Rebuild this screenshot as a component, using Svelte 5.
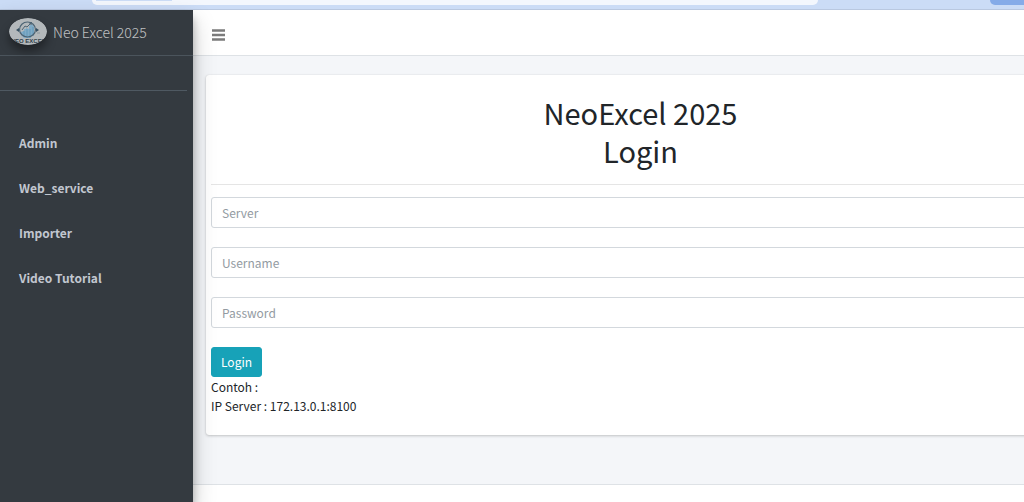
<script lang="ts">
  let server: string = '';
  let username: string = '';
  let password: string = '';

  let sidebarOpen: boolean = true;

  const menu = ['Admin', 'Web_service', 'Importer', 'Video Tutorial'];

  function handleSubmit(event: Event) {
    event.preventDefault();
  }
</script>

<div class="window">
  <!-- Browser toolbar -->
  <div class="toolbar">
    <div class="address"><div class="address-chip"></div></div>
    <div class="toolbar-pill"></div>
  </div>

  <div class="wrapper">
    {#if sidebarOpen}
      <aside class="sidebar">
        <a class="brand" href="#home">
          <svg class="brand-logo" viewBox="0 0 38 27" aria-hidden="true">
            <defs>
              <clipPath id="logo-oval"><ellipse cx="19" cy="13.5" rx="19" ry="13.5" /></clipPath>
            </defs>
            <g clip-path="url(#logo-oval)">
              <rect width="38" height="27" fill="#b3b8bb" />
              <path d="M12 17V14l3-1v-2h2v-1l3 1V8l3-2 2 3v7l-4 4h-6z" fill="#80abc7" />
              <path d="M15 19v-6M18 20v-9M21 20v-9M24 18V9" stroke="#6399b9" stroke-width="1" />
              <ellipse cx="18.5" cy="11.5" rx="8" ry="7.5" fill="none" stroke="#4d6474" stroke-width="1.2" />
              <path d="M13 12l3-4 2 1 5-5M20 5h2v2" fill="none" stroke="#4d6474" stroke-width="1" />
              <path d="M7 12l3-2v4zM30 12l-3-2v4z" fill="#354f60" />
              <path d="M28 15h3" stroke="#8b969d" stroke-width="1" />
              <text x="19" y="25" text-anchor="middle" class="logo-text">NEO EXCEL</text>
            </g>
          </svg>
          <span>Neo Excel 2025</span>
        </a>
        <div class="user-panel"></div>
        <nav>
          <ul>
            {#each menu as item}
              <li><a href="#{item}">{item}</a></li>
            {/each}
          </ul>
        </nav>
      </aside>
    {/if}

    <div class="page">
      <header class="navbar">
        <button class="toggle" aria-label="Toggle menu" on:click={() => (sidebarOpen = !sidebarOpen)}>
          <svg viewBox="0 0 13 12" width="13" height="12" aria-hidden="true">
            <path d="M0 1.5h13M0 6h13M0 10.5h13" stroke="#7b7b7b" stroke-width="2.4" />
          </svg>
        </button>
      </header>

      <main class="content">
        <div class="card">
          <h1>NeoExcel 2025<br />Login</h1>
          <hr />
          <form on:submit={handleSubmit}>
            <input type="text" aria-label="Server" placeholder="Server" bind:value={server} />
            <input type="text" aria-label="Username" placeholder="Username" bind:value={username} />
            <input type="password" aria-label="Password" placeholder="Password" bind:value={password} />
            <button class="login" type="submit">Login</button>
          </form>
          <p>Contoh :<br />IP Server : 172.13.0.1:8100</p>
        </div>
      </main>

      <footer></footer>
    </div>
  </div>
</div>

<style>
  :global(body) {
    overflow: hidden;
  }

  .window {
    display: flex;
    flex-direction: column;
    height: 100vh;
    overflow: hidden;
    font-family: "Noto Sans CJK JP", "Noto Sans", sans-serif;
    font-size: 12px;
    line-height: 19px;
    color: #212529;
  }

  .window * {
    box-sizing: border-box;
  }

  .toolbar {
    display: flex;
    flex: none;
    justify-content: space-between;
    align-items: flex-start;
    height: 10px;
    padding-left: 92px;
    background: #cbdcf6;
    border-bottom: 1px solid #b9c8e0;
  }

  .address {
    width: 726px;
    height: 5px;
    padding-left: 4px;
    background: #f3f7fd;
    border-radius: 0 0 12px 12px;
  }

  .address-chip {
    width: 76px;
    height: 1px;
    background: #cbdcf6;
  }

  .toolbar-pill {
    width: 34px;
    height: 5px;
    background: #85abe8;
    border-radius: 0 0 0 12px;
  }

  .wrapper {
    display: flex;
    flex: 1;
    min-height: 0;
  }

  .sidebar {
    position: relative;
    z-index: 1;
    flex: none;
    width: 193px;
    background: #343a40;
    box-shadow: 0 11px 22px rgba(0, 0, 0, 0.22), 0 8px 8px rgba(0, 0, 0, 0.25);
  }

  .brand {
    display: flex;
    align-items: center;
    gap: 6px;
    height: 46px;
    padding: 0 9px;
    border-bottom: 1px solid #4b545c;
    color: rgba(255, 255, 255, 0.7);
    font-size: 14px;
    font-weight: 300;
    text-decoration: none;
  }

  .brand-logo {
    width: 38px;
    height: 27px;
    margin-bottom: 2px;
    border-radius: 50%;
    box-shadow: 0 6px 10px rgba(0, 0, 0, 0.4);
  }

  .logo-text {
    font-family: "Liberation Sans", sans-serif;
    font-size: 6px;
    font-weight: 700;
    fill: #303e49;
  }

  .user-panel {
    height: 35px;
    margin-right: 6px;
    border-bottom: 1px solid #4f5962;
  }

  nav ul {
    margin: 0;
    padding: 29px 19px;
    list-style: none;
  }

  nav li {
    height: 45px;
  }

  nav a {
    display: block;
    color: #c2c7d0;
    font-weight: 700;
    line-height: 45px;
    text-decoration: none;
  }

  .page {
    display: flex;
    flex: 1;
    flex-direction: column;
    min-width: 0;
    background: #f4f6f9;
  }

  .navbar {
    display: flex;
    align-items: center;
    height: 46px;
    padding: 5px 19px 0;
    background: #ffffff;
    border-bottom: 1px solid #dee2e6;
  }

  .toggle {
    display: flex;
    padding: 0;
    background: none;
    border: none;
    cursor: pointer;
  }

  /* The card is wider than the visible area and runs off to the right */
  .content {
    flex: 1;
    width: calc(100% + 64px);
    padding: 19px 13px;
  }

  .card {
    padding: 18px 5px 20px;
    background: #ffffff;
    border-radius: 3px;
    box-shadow: 0 0 1px rgba(0, 0, 0, 0.13), 0 1px 3px rgba(0, 0, 0, 0.2);
  }

  h1 {
    margin: 0;
    font-size: 29px;
    font-weight: 400;
    line-height: 38px;
    text-align: center;
  }

  hr {
    margin: 15px 0 12px;
    border: none;
    border-top: 1px solid #e5e5e5;
  }

  form {
    display: flex;
    flex-direction: column;
    align-items: flex-start;
    gap: 19px;
  }

  input {
    width: 100%;
    height: 31px;
    padding: 0 10px;
    background: #ffffff;
    border: 1px solid #d3d8dd;
    border-radius: 3px;
    color: #495057;
    font: inherit;
  }

  input::placeholder {
    color: #939ba2;
  }

  .login {
    height: 30px;
    padding: 0 9px 2px;
    background: #17a2b8;
    border: 1px solid #17a2b8;
    border-radius: 3px;
    color: #ffffff;
    font: inherit;
    cursor: pointer;
  }

  p {
    margin: 0;
  }

  footer {
    flex: none;
    height: 18px;
    background: #ffffff;
    border-top: 1px solid #dee2e6;
  }
</style>
